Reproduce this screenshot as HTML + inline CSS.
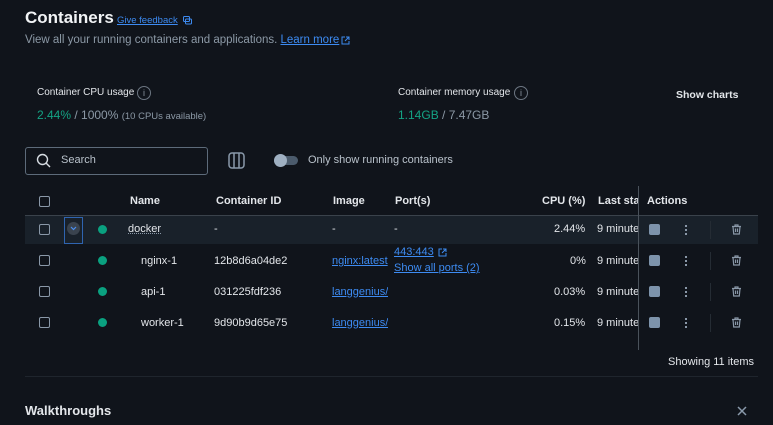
<!DOCTYPE html>
<html><head><meta charset="utf-8"><style>
*{margin:0;padding:0;box-sizing:border-box}
body{width:773px;height:425px;background:#10141b;font-family:"Liberation Sans",sans-serif;color:#e3e6ea;position:relative;overflow:hidden;font-size:11px}
.a{position:absolute;white-space:nowrap}
.link{color:#3d8bf2;text-decoration:underline}
.cb{position:absolute;width:11px;height:11px;border:1.5px solid #8a98a8;border-radius:2px}
.dot{position:absolute;width:9px;height:9px;border-radius:50%;background:#0aa180}
.sq{position:absolute;width:11px;height:11px;border-radius:2px;background:#7d93ab}
.kb{position:absolute;width:2px;height:2px;background:#8a98a8;box-shadow:0 4px #8a98a8,0 8px #8a98a8}
.sep{position:absolute;width:1px;height:18px;background:#252c34}
.mu{color:#8c99a6}
</style></head><body>
<div class="a" style="left:25px;top:8px;font-size:17px;font-weight:bold;color:#f1f3f5">Containers</div>
<div class="a link" style="left:117px;top:15px;font-size:9.5px">Give feedback</div>
<svg class="a" style="left:183px;top:16px" width="9" height="9" viewBox="0 0 9 9" fill="none" stroke="#3d8bf2" stroke-width="1"><rect x="0.5" y="0.5" width="6" height="5" rx="1"/><rect x="2.5" y="3" width="6" height="5" rx="1"/></svg>
<div class="a mu" style="left:25px;top:34px;font-size:11.5px">View all your running containers and applications. <span class="link">Learn more</span></div>
<svg class="a" style="left:341px;top:36px" width="9" height="9" viewBox="0 0 9 9" fill="none" stroke="#3d8bf2" stroke-width="1"><path d="M4 1H1v7h7V5M5 1h3v3M8 1L4 5"/></svg>

<div class="a" style="left:37px;top:87px;font-size:10px">Container CPU usage</div>
<div class="a" style="left:137px;top:86px;width:14px;height:14px;border:1px solid #6c7682;border-radius:50%;font-size:9px;text-align:center;line-height:12px;color:#8a94a0">i</div>
<div class="a" style="left:37px;top:108px;font-size:12px;color:#8c99a6"><span style="color:#14a384">2.44%</span> / 1000% <span style="font-size:9.5px">(10 CPUs available)</span></div>
<div class="a" style="left:398px;top:87px;font-size:10px">Container memory usage</div>
<div class="a" style="left:514px;top:86px;width:14px;height:14px;border:1px solid #6c7682;border-radius:50%;font-size:9px;text-align:center;line-height:12px;color:#8a94a0">i</div>
<div class="a" style="left:398px;top:108px;font-size:12px;color:#8c99a6"><span style="color:#14a384">1.14GB</span> / 7.47GB</div>
<div class="a" style="left:676px;top:89px;font-size:10.5px;font-weight:bold">Show charts</div>

<div class="a" style="left:25px;top:147px;width:183px;height:28px;border:1px solid #5d6b7a;border-radius:3px"></div>
<svg class="a" style="left:36px;top:153px" width="15" height="15" viewBox="0 0 15 15" fill="none" stroke="#d7dde3" stroke-width="1.4"><circle cx="6.5" cy="6.5" r="5"/><path d="M10 10l4 4"/></svg>
<div class="a" style="left:61px;top:154px;font-size:11px;color:#b9c2cb">Search</div>
<svg class="a" style="left:228px;top:152px" width="17" height="17" viewBox="0 0 17 17" fill="none" stroke="#8a9aab" stroke-width="1.5"><rect x="1" y="1" width="15" height="15" rx="3"/><path d="M6 1v15M11 1v15"/></svg>
<div class="a" style="left:274px;top:156px;width:24px;height:9px;border-radius:5px;background:#4b5b6c"></div>
<div class="a" style="left:274px;top:154px;width:13px;height:13px;border-radius:50%;background:#9fb0c2"></div>
<div class="a" style="left:308px;top:154px;font-size:11px;color:#b9c2cb">Only show running containers</div>

<div class="cb" style="left:39px;top:196px"></div>
<div class="a" style="left:130px;top:195px;font-weight:bold">Name</div>
<div class="a" style="left:216px;top:195px;font-weight:bold">Container ID</div>
<div class="a" style="left:333px;top:195px;font-weight:bold">Image</div>
<div class="a" style="left:395px;top:195px;font-weight:bold">Port(s)</div>
<div class="a" style="left:542px;top:195px;font-weight:bold">CPU (%)</div>
<div class="a" style="left:598px;top:195px;font-weight:bold;width:40px;overflow:hidden">Last started</div>
<div class="a" style="left:647px;top:195px;font-weight:bold">Actions</div>
<div class="a" style="left:25px;top:215px;width:733px;height:1px;background:#3a424b"></div>
<div class="a" style="left:25px;top:216px;width:733px;height:28px;background:#19212a"></div>
<div class="a" style="left:64px;top:217px;width:19px;height:27px;border:1px solid #2f64b0"></div>
<div class="a" style="left:67px;top:222px;width:13px;height:13px;border-radius:50%;background:#3a434e"></div>
<svg class="a" style="left:70px;top:226px" width="7" height="5" viewBox="0 0 7 5" fill="none" stroke="#4b8ff0" stroke-width="1.2"><path d="M1 1l2.5 2.5L6 1"/></svg>
<div class="a" style="left:638px;top:186px;width:1px;height:164px;background:#4a525b"></div>

<div class="cb" style="left:39px;top:224px"></div><div class="dot" style="left:98px;top:225px"></div>
<div class="a" style="left:128px;top:223px;text-decoration:underline dotted #8a98a8">docker</div>
<div class="a" style="left:214px;top:223px">-</div><div class="a" style="left:332px;top:223px">-</div><div class="a" style="left:394px;top:223px">-</div>
<div class="a" style="left:554px;top:223px">2.44%</div><div class="a" style="left:597px;top:223px;width:41px;overflow:hidden">9 minutes</div>

<div class="cb" style="left:39px;top:255px"></div><div class="dot" style="left:98px;top:256px"></div>
<div class="a" style="left:141px;top:255px">nginx-1</div><div class="a" style="left:214px;top:255px">12b8d6a04de2</div>
<div class="a link" style="left:332px;top:255px;width:56px;overflow:hidden">nginx:latest</div>
<div class="a link" style="left:394px;top:246px">443:443</div>
<svg class="a" style="left:438px;top:248px" width="9" height="9" viewBox="0 0 9 9" fill="none" stroke="#3d8bf2" stroke-width="1"><path d="M4 1H1v7h7V5M5 1h3v3M8 1L4 5"/></svg>
<div class="a link" style="left:394px;top:262px">Show all ports (2)</div>
<div class="a" style="left:570px;top:255px">0%</div><div class="a" style="left:597px;top:255px;width:41px;overflow:hidden">9 minutes</div>

<div class="cb" style="left:39px;top:286px"></div><div class="dot" style="left:98px;top:287px"></div>
<div class="a" style="left:141px;top:286px">api-1</div><div class="a" style="left:214px;top:286px">031225fdf236</div>
<div class="a link" style="left:332px;top:286px;width:56px;overflow:hidden">langgenius/api</div>
<div class="a" style="left:554px;top:286px">0.03%</div><div class="a" style="left:597px;top:286px;width:41px;overflow:hidden">9 minutes</div>

<div class="cb" style="left:39px;top:317px"></div><div class="dot" style="left:98px;top:318px"></div>
<div class="a" style="left:141px;top:317px">worker-1</div><div class="a" style="left:214px;top:317px">9d90b9d65e75</div>
<div class="a link" style="left:332px;top:317px;width:56px;overflow:hidden">langgenius/api</div>
<div class="a" style="left:554px;top:317px">0.15%</div><div class="a" style="left:597px;top:317px;width:41px;overflow:hidden">9 minutes</div>

<div class="sq" style="left:649px;top:224px"></div><div class="kb" style="left:685px;top:225px"></div><div class="sep" style="left:710px;top:221px"></div>
<div class="sq" style="left:649px;top:255px"></div><div class="kb" style="left:685px;top:256px"></div><div class="sep" style="left:710px;top:252px"></div>
<div class="sq" style="left:649px;top:286px"></div><div class="kb" style="left:685px;top:287px"></div><div class="sep" style="left:710px;top:283px"></div>
<div class="sq" style="left:649px;top:317px"></div><div class="kb" style="left:685px;top:318px"></div><div class="sep" style="left:710px;top:314px"></div>
<svg class="a" style="left:731px;top:224px" width="11" height="11" viewBox="0 0 11 11" fill="none" stroke="#8a98a8" stroke-width="1.2"><path d="M1 2.5h9M4 2.5V1h3v1.5M2 2.5l.7 7.5h5.6L9 2.5M4.5 4.5v3.5M6.5 4.5v3.5"/></svg>
<svg class="a" style="left:731px;top:255px" width="11" height="11" viewBox="0 0 11 11" fill="none" stroke="#8a98a8" stroke-width="1.2"><path d="M1 2.5h9M4 2.5V1h3v1.5M2 2.5l.7 7.5h5.6L9 2.5M4.5 4.5v3.5M6.5 4.5v3.5"/></svg>
<svg class="a" style="left:731px;top:286px" width="11" height="11" viewBox="0 0 11 11" fill="none" stroke="#8a98a8" stroke-width="1.2"><path d="M1 2.5h9M4 2.5V1h3v1.5M2 2.5l.7 7.5h5.6L9 2.5M4.5 4.5v3.5M6.5 4.5v3.5"/></svg>
<svg class="a" style="left:731px;top:317px" width="11" height="11" viewBox="0 0 11 11" fill="none" stroke="#8a98a8" stroke-width="1.2"><path d="M1 2.5h9M4 2.5V1h3v1.5M2 2.5l.7 7.5h5.6L9 2.5M4.5 4.5v3.5M6.5 4.5v3.5"/></svg>

<div class="a" style="left:668px;top:356px;font-size:11px">Showing 11 items</div>
<div class="a" style="left:25px;top:376px;width:733px;height:1px;background:#1f252d"></div>
<div class="a" style="left:25px;top:403px;font-size:13px;font-weight:bold">Walkthroughs</div>
<svg class="a" style="left:737px;top:406px" width="10" height="10" viewBox="0 0 10 10" stroke="#8a9aab" stroke-width="1.5"><path d="M1 1l8 8M9 1l-8 8"/></svg>
</body></html>
